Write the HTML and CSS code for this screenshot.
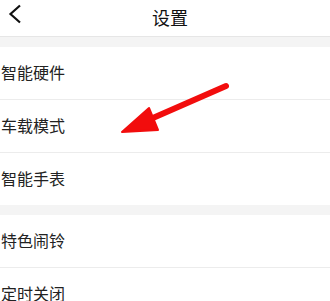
FILE: index.html
```html
<!DOCTYPE html>
<html lang="zh-CN">
    <head>
        <meta charset="UTF-8" />
        <meta name="viewport" content="width=device-width, initial-scale=1.0" />
        <title>设置</title>
        <link rel="stylesheet" href="styles.css">
    </head>
    <body>
        <div class="page">
            <header class="topbar">
                <span class="back">
                    <svg width="14" height="20" viewBox="0 0 14 20">
                        <path d="M12 1.5 L2.5 10 L12 18.5" fill="none" stroke="#111" stroke-width="2.2" stroke-linejoin="miter" />
                    </svg>
                </span>
                <h1 class="title">设置</h1>
            </header>

            <div class="gap"></div>
            <ul class="group">
                <li>智能硬件</li>
                <li>车载模式</li>
                <li>智能手表</li>
            </ul>

            <div class="gap"></div>
            <ul class="group">
                <li>特色闹铃</li>
                <li>定时关闭</li>
            </ul>

            <svg class="pointer" width="330" height="301" viewBox="0 0 330 301">
                <line x1="226" y1="86" x2="146" y2="121" stroke="#f20d0d" stroke-width="6" stroke-linecap="round" />
                <polygon points="122,132 149,108 158,130" fill="#f20d0d" stroke="#f20d0d" stroke-width="2" stroke-linejoin="round" />
            </svg>
        </div>
    </body>
</html>
```

FILE: styles.css
```css
body {
    margin: 0;
    padding: 0;
    background: #fff;
    color: #222;
    font-family: "Noto Sans CJK SC", "Noto Sans", sans-serif;
}

.page {
    position: relative;
    width: 330px;
    height: 301px;
    overflow: hidden;
}

.topbar {
    height: 36px;
    display: flex;
    align-items: center;
    justify-content: center;
    position: relative;
    border-bottom: 1px solid #e6e6e6;
}

.back {
    position: absolute;
    left: 8px;
    top: 4px;
    display: flex;
}

.title {
    margin: 0 0 2px 10px;
    font-size: 18px;
    font-weight: normal;
    color: #111;
}

.gap {
    height: 10px;
    background: #f4f4f4;
}

.group {
    list-style: none;
    margin: 0;
    padding: 0;
}

.group li {
    height: 50px;
    display: flex;
    align-items: center;
    padding: 0 0 2px 1px;
    font-size: 16px;
    border-bottom: 1px solid #ececec;
}

.group li:last-child {
    border-bottom: none;
}

.pointer {
    position: absolute;
    left: 0;
    top: 0;
}
```
